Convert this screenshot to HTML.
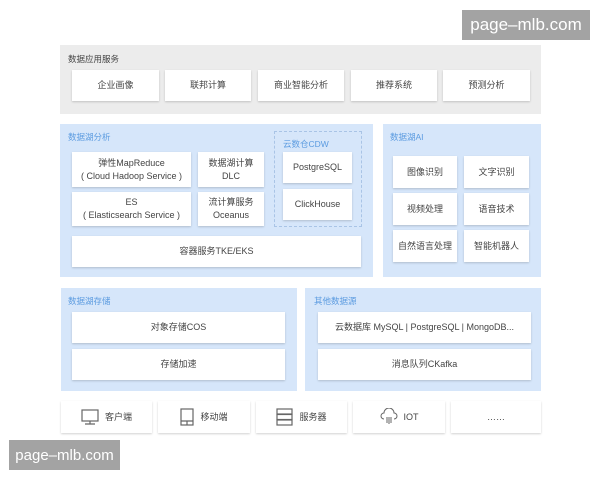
<!DOCTYPE html>
<html><head><meta charset="utf-8"><style>
body{margin:0;width:600px;height:480px;background:#fff;position:relative;overflow:hidden;font-family:"Liberation Sans","Noto Sans CJK SC",sans-serif;}
div{position:absolute;box-sizing:border-box}
.p{background:#ececec}
.b{background:#d6e6fa}
.c{background:#fff;box-shadow:0 1px 2px rgba(0,0,0,.18);display:flex;align-items:center;justify-content:center;text-align:center;font-size:9px;color:#444;line-height:13px}
.t{font-size:8.5px;color:#444}
.bt{font-size:8.5px;color:#5b9be0}
.wm{background:#a3a3a3;color:#fff;font-size:17px;display:flex;align-items:center;justify-content:center}
svg{margin-right:6px}
</style></head><body>
<div class="p" style="left:60px;top:45px;width:481px;height:69px"></div>
<div class="t" style="left:68px;top:53px">数据应用服务</div>
<div class="c" style="left:72px;top:70px;width:87px;height:31px">企业画像</div>
<div class="c" style="left:165px;top:70px;width:86px;height:31px">联邦计算</div>
<div class="c" style="left:258px;top:70px;width:86px;height:31px">商业智能分析</div>
<div class="c" style="left:351px;top:70px;width:86px;height:31px">推荐系统</div>
<div class="c" style="left:443px;top:70px;width:87px;height:31px">预测分析</div>

<div class="b" style="left:60px;top:124px;width:313px;height:153px"></div>
<div class="bt" style="left:68px;top:131px">数据湖分析</div>
<div class="c" style="left:72px;top:152px;width:119px;height:35px">弹性MapReduce<br>( Cloud Hadoop Service )</div>
<div class="c" style="left:198px;top:152px;width:66px;height:35px">数据湖计算<br>DLC</div>
<div class="c" style="left:72px;top:192px;width:119px;height:34px">ES<br>( Elasticsearch Service )</div>
<div class="c" style="left:198px;top:192px;width:66px;height:34px">流计算服务<br>Oceanus</div>
<div class="c" style="left:72px;top:236px;width:289px;height:31px">容器服务TKE/EKS</div>
<div style="left:274px;top:131px;width:88px;height:96px;border:1px dashed #a9c4e6"></div>
<div class="bt" style="left:283px;top:138px">云数仓CDW</div>
<div class="c" style="left:283px;top:152px;width:69px;height:31px">PostgreSQL</div>
<div class="c" style="left:283px;top:189px;width:69px;height:31px">ClickHouse</div>

<div class="b" style="left:383px;top:124px;width:158px;height:153px"></div>
<div class="bt" style="left:390px;top:131px">数据湖AI</div>
<div class="c" style="left:393px;top:156px;width:64px;height:32px">图像识别</div>
<div class="c" style="left:464px;top:156px;width:65px;height:32px">文字识别</div>
<div class="c" style="left:393px;top:193px;width:64px;height:32px">视频处理</div>
<div class="c" style="left:464px;top:193px;width:65px;height:32px">语音技术</div>
<div class="c" style="left:393px;top:230px;width:64px;height:32px">自然语言处理</div>
<div class="c" style="left:464px;top:230px;width:65px;height:32px">智能机器人</div>

<div class="b" style="left:61px;top:288px;width:236px;height:103px"></div>
<div class="bt" style="left:68px;top:295px">数据湖存储</div>
<div class="c" style="left:72px;top:312px;width:213px;height:31px">对象存储COS</div>
<div class="c" style="left:72px;top:349px;width:213px;height:31px">存储加速</div>
<div class="b" style="left:305px;top:288px;width:236px;height:103px"></div>
<div class="bt" style="left:314px;top:295px">其他数据源</div>
<div class="c" style="left:318px;top:312px;width:213px;height:31px">云数据库 MySQL | PostgreSQL | MongoDB...</div>
<div class="c" style="left:318px;top:349px;width:213px;height:31px">消息队列CKafka</div>

<div class="c" style="left:61px;top:401px;width:91px;height:32px"><svg width="18" height="17" viewBox="0 0 18 17" fill="none" stroke="#666" stroke-width="1.2"><rect x="1" y="1" width="16" height="11"/><path d="M9 12v3M4 15h10"/></svg>客户端</div>
<div class="c" style="left:158px;top:401px;width:92px;height:32px"><svg width="14" height="18" viewBox="0 0 14 18" fill="none" stroke="#666" stroke-width="1.2"><rect x="1" y="1" width="12" height="16"/><path d="M1 13h12M7 13v4"/></svg>移动端</div>
<div class="c" style="left:256px;top:401px;width:91px;height:32px"><svg width="17" height="18" viewBox="0 0 17 18" fill="none" stroke="#666" stroke-width="1.2"><rect x="1" y="1" width="15" height="5"/><rect x="1" y="6.5" width="15" height="5"/><rect x="1" y="12" width="15" height="5"/></svg>服务器</div>
<div class="c" style="left:353px;top:401px;width:92px;height:32px"><svg width="18" height="18" viewBox="0 0 18 18" fill="none" stroke="#666" stroke-width="1"><path d="M4 11a3 3 0 0 1 0-6 5 5 0 0 1 10 0 3 3 0 0 1 0 6M7 9v6M9 9v7M11 9v6"/></svg>IOT</div>
<div class="c" style="left:451px;top:401px;width:90px;height:32px">……</div>

<div class="wm" style="left:462px;top:10px;width:128px;height:30px">page–mlb.com</div>
<div class="wm" style="left:9px;top:440px;width:111px;height:30px;font-size:15px">page–mlb.com</div>
</body></html>
